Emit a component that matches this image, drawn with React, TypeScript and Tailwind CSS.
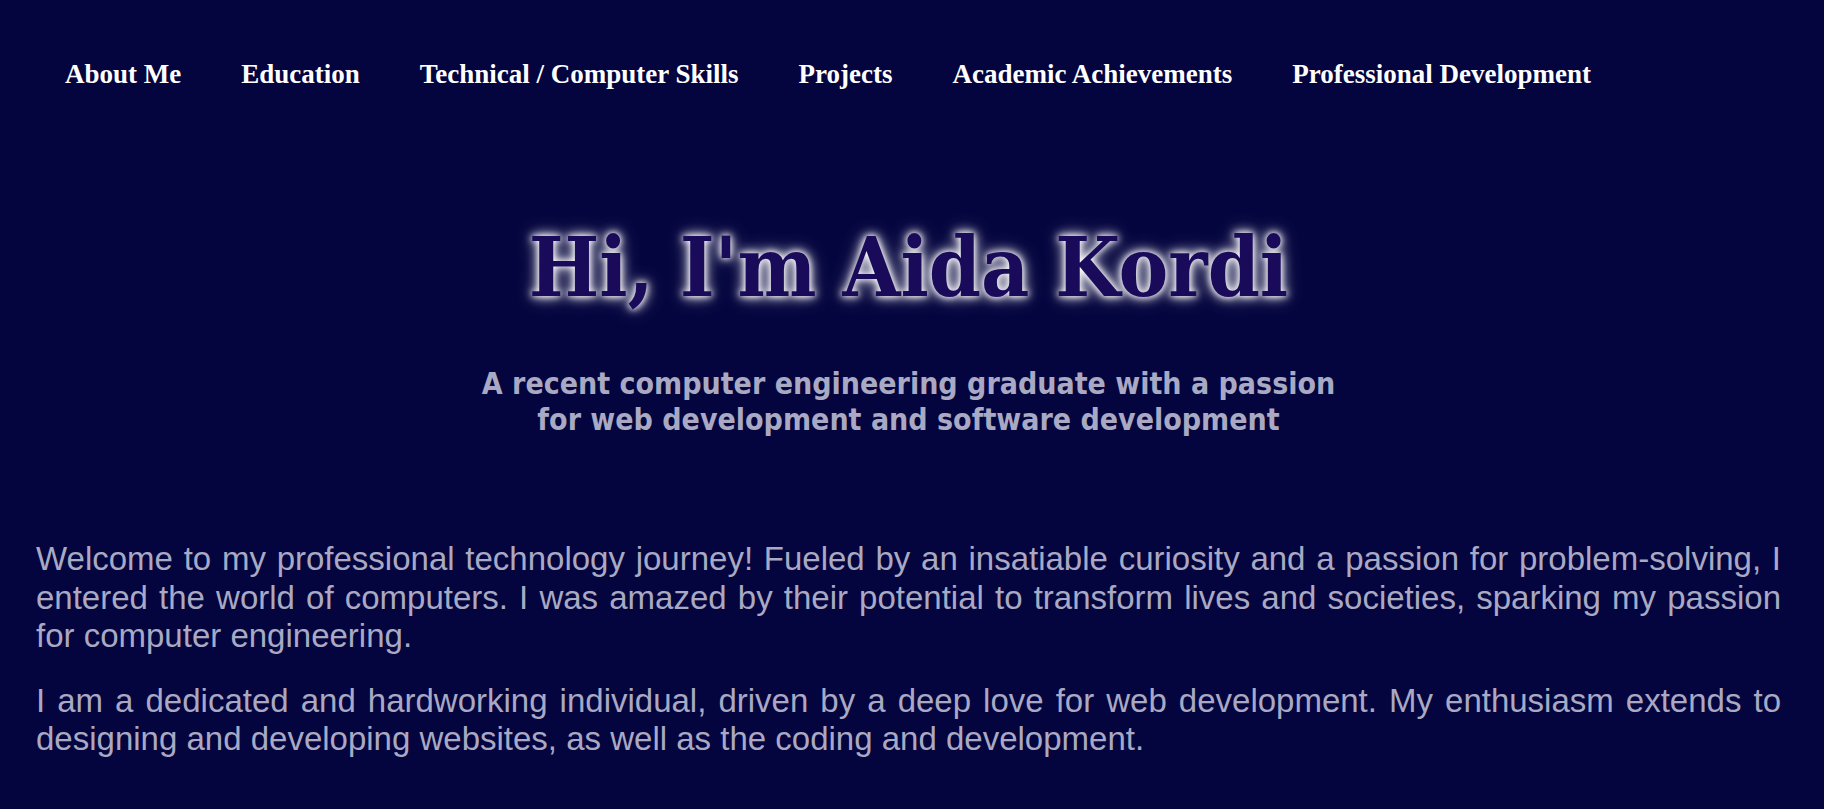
const navItems = [
  'About Me',
  'Education',
  'Technical / Computer Skills',
  'Projects',
  'Academic Achievements',
  'Professional Development',
]

const App: React.FC = () => {
  return (
    <div className="min-h-[809px] w-full bg-[#04043e]">
      <nav className="pl-[65px] pt-[59px]">
        <ul className="flex gap-[60px]">
          {navItems.map((item) => (
            <li key={item}>
              <a
                href="#"
                className="font-['Liberation_Serif',serif] text-[27px] leading-[30px] font-bold text-white"
              >
                {item}
              </a>
            </li>
          ))}
        </ul>
      </nav>

      <main className="pl-[36px] pr-[43px]">
        <div className="pt-[133px] text-center">
          <h1 className="font-['DejaVu_Serif_Condensed','DejaVu_Serif',serif] text-[83px] leading-[90px] font-bold text-[#1a0a5a] [font-stretch:condensed] [text-shadow:0_0_6px_#fff,0_0_12px_#fff,0_0_20px_rgba(255,255,255,0.5)]">
            Hi, I'm Aida Kordi
          </h1>
          <p className="mx-auto mt-[54px] max-w-[1000px] font-['DejaVu_Sans_Condensed','DejaVu_Sans',sans-serif] text-[30px] leading-[36px] font-bold text-[#a9a9c3] [font-stretch:condensed]">
            A recent computer engineering graduate with a passion
            <br />
            for web development and software development
          </p>
        </div>

        <div className="mt-[102px] font-['Liberation_Sans',Arial,sans-serif] text-[33px] leading-[38.5px] text-[#a9a9c3]">
          <p className="text-justify">
            Welcome to my professional technology journey! Fueled by an insatiable curiosity and a
            passion for problem-solving, I entered the world of computers. I was amazed by their
            potential to transform lives and societies, sparking my passion for computer engineering.
          </p>
          <p className="mt-[26px] text-justify">
            I am a dedicated and hardworking individual, driven by a deep love for web development.
            My enthusiasm extends to designing and developing websites, as well as the coding and
            development.
          </p>
        </div>
      </main>
    </div>
  )
}

export default App
